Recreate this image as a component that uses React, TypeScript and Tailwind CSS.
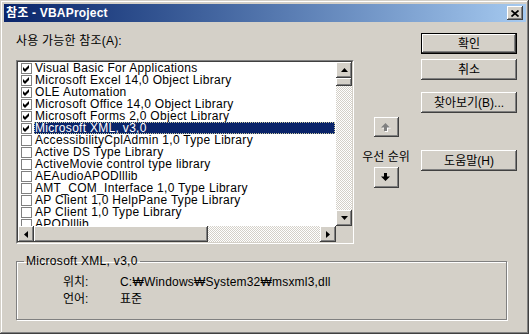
import React from "react";

const FONT = "font-['Liberation_Sans','Noto_Sans_CJK_KR',sans-serif]";
const RAISED =
  "shadow-[inset_-1px_-1px_0_#404040,inset_1px_1px_0_#ffffff,inset_-2px_-2px_0_#808080,inset_2px_2px_0_#d4d0c8]";
const CHECKER =
  "bg-[repeating-conic-gradient(#ffffff_0_25%,#d4d0c8_0_50%)] bg-[length:2px_2px]";

type Item = { label: string; checked: boolean; selected?: boolean };

const items: Item[] = [
  { label: "Visual Basic For Applications", checked: true },
  { label: "Microsoft Excel 14,0 Object Library", checked: true },
  { label: "OLE Automation", checked: true },
  { label: "Microsoft Office 14,0 Object Library", checked: true },
  { label: "Microsoft Forms 2,0 Object Library", checked: true },
  { label: "Microsoft XML, v3,0", checked: true, selected: true },
  { label: "AccessibilityCplAdmin 1,0 Type Library", checked: false },
  { label: "Active DS Type Library", checked: false },
  { label: "ActiveMovie control type library", checked: false },
  { label: "AEAudioAPODlllib", checked: false },
  { label: "AMT_COM_Interface 1,0 Type Library", checked: false },
  { label: "AP Client 1,0 HelpPane Type Library", checked: false },
  { label: "AP Client 1,0 Type Library", checked: false },
  { label: "APODlllib", checked: false },
];

function Check() {
  return (
    <svg width="7" height="7" viewBox="0 0 7 7">
      <polygon points="0,2 2,4 6,0 6,3 2,7 0,5" fill="#000" />
    </svg>
  );
}

function Tri({ dir, color = "#000" }: { dir: "up" | "down" | "left" | "right"; color?: string }) {
  const pts: Record<string, string> = {
    up: "3.5,0 7,4 0,4",
    down: "0,0 7,0 3.5,4",
    left: "4,0 4,7 0,3.5",
    right: "0,0 4,3.5 0,7",
  };
  const w = dir === "up" || dir === "down" ? 7 : 4;
  const h = dir === "up" || dir === "down" ? 4 : 7;
  return (
    <svg width={w} height={h} viewBox={`0 0 ${w} ${h}`}>
      <polygon points={pts[dir]} fill={color} />
    </svg>
  );
}

function ScrollBtn({ dir }: { dir: "up" | "down" | "left" | "right" }) {
  return (
    <div className={`w-[16px] h-[16px] shrink-0 bg-[#d4d0c8] ${RAISED} flex items-center justify-center`}>
      <Tri dir={dir} />
    </div>
  );
}

function BlockArrow({ dir, disabled }: { dir: "up" | "down"; disabled?: boolean }) {
  const up = "4.5,0 9,4.5 6,4.5 6,8 3,8 3,4.5 0,4.5";
  const down = "3,0 6,0 6,3.5 9,3.5 4.5,8 0,3.5 3,3.5";
  const pts = dir === "up" ? up : down;
  return (
    <svg width="10" height="9" viewBox="0 0 10 9">
      {disabled && <polygon points={pts} fill="#ffffff" transform="translate(1,1)" />}
      <polygon points={pts} fill={disabled ? "#808080" : "#000"} />
    </svg>
  );
}

function Button({ children, def, className = "" }: { children: React.ReactNode; def?: boolean; className?: string }) {
  return (
    <div
      className={`w-[96px] h-[21px] ${def ? "border border-black" : ""} bg-[#d4d0c8] ${className}`}
    >
      <div className={`w-full h-full ${RAISED} flex items-center justify-center text-[12px] leading-[12px] text-black`}>
        {children}
      </div>
    </div>
  );
}

export default function App() {
  return (
    <div className={`w-[529px] h-[334px] bg-[#d4d0c8] ${FONT} text-black select-none`}>
      <div
        className="w-full h-full pl-[4px] pt-[4px] pr-[3px] shadow-[inset_-1px_-1px_0_#404040,inset_1px_1px_0_#d4d0c8,inset_-2px_-2px_0_#808080,inset_2px_2px_0_#ffffff]"
      >
        {/* Title bar */}
        <div className="h-[18px] bg-gradient-to-r from-[#0a246a] to-[#a6caf0] flex items-center justify-between pl-[2px] pr-[3px]">
          <span className="text-white font-bold text-[12px] leading-[12px] tracking-[0.2px]">참조 - VBAProject</span>
          <div className={`w-[16px] h-[14px] bg-[#d4d0c8] ${RAISED} flex items-center justify-center`}>
            <svg width="8" height="7" viewBox="0 0 8 7">
              <path d="M0.5 0.5 L7.5 6.5 M7.5 0.5 L0.5 6.5" stroke="#000" strokeWidth="1.7" />
            </svg>
          </div>
        </div>

        {/* Body */}
        <div className="pl-[12px]">
          <div className="flex">
            {/* Left column */}
            <div className="flex flex-col">
              <div className="mt-[13px] text-[12px] leading-[12px] tracking-[0.2px]">사용 가능한 참조(A):</div>
              <div className="mt-[13px] w-[338px] h-[184px] border-t border-l border-[#808080] border-r border-b border-r-white border-b-white">
                <div className="w-full h-full border-t border-l border-[#404040] border-r border-b border-r-[#d4d0c8] border-b-[#d4d0c8] bg-white flex flex-col">
                  <div className="flex flex-1 min-h-0">
                    <div className="flex-1 overflow-hidden">
                      {items.map((it) => (
                        <div key={it.label} className="h-[12px] flex items-center">
                          <div className="ml-[3px] w-[11px] h-[11px] shrink-0 border border-[#808080] bg-white flex items-center justify-center">
                            {it.checked && <Check />}
                          </div>
                          <div
                            className={`ml-[2px] mr-[1px] flex-1 h-[12px] flex items-center pl-[1px] whitespace-nowrap text-[12px] leading-[12px] tracking-[0.3px] ${
                              it.selected ? "bg-[#0a246a] text-white outline outline-1 outline-dotted outline-offset-[-1px] outline-[#c8c8a0]" : ""
                            }`}
                          >
                            {it.label}
                          </div>
                        </div>
                      ))}
                    </div>
                    {/* Vertical scrollbar */}
                    <div className="w-[16px] flex flex-col">
                      <ScrollBtn dir="up" />
                      <div className={`w-[16px] h-[8px] bg-[#d4d0c8] ${RAISED}`} />
                      <div className={`flex-1 ${CHECKER}`} />
                      <ScrollBtn dir="down" />
                    </div>
                  </div>
                  {/* Horizontal scrollbar */}
                  <div className="h-[16px] flex shrink-0">
                    <ScrollBtn dir="left" />
                    <div className={`w-[174px] h-[16px] bg-[#d4d0c8] ${RAISED}`} />
                    <div className={`flex-1 ${CHECKER}`} />
                    <ScrollBtn dir="right" />
                    <div className="w-[16px] h-[16px] bg-[#d4d0c8]" />
                  </div>
                </div>
              </div>
            </div>

            {/* Middle column */}
            <div className="w-[67px] flex flex-col items-center pr-[3px]">
              <div className={`mt-[95px] w-[25px] h-[20px] bg-[#d4d0c8] ${RAISED} flex items-center justify-center`}>
                <BlockArrow dir="up" disabled />
              </div>
              <div className="mt-[14px] text-[12px] leading-[12px] whitespace-nowrap">우선 순위</div>
              <div className={`mt-[4px] w-[25px] h-[21px] bg-[#d4d0c8] ${RAISED} flex items-center justify-center`}>
                <BlockArrow dir="down" />
              </div>
            </div>

            {/* Right column */}
            <div className="flex flex-col">
              <Button def className="mt-[11px]">확인</Button>
              <Button className="mt-[5px]">취소</Button>
              <Button className="mt-[12px]">찾아보기(B)...</Button>
              <Button className="mt-[37px]">도움말(H)</Button>
            </div>
          </div>

          {/* Group box */}
          <fieldset className="mt-[11px] w-[491px] h-[65px] border border-[#808080] shadow-[inset_1px_1px_0_#ffffff,1px_1px_0_#ffffff] px-0 pb-0 m-0">
            <legend className="ml-[7px] px-[2px] text-[12px] leading-[12px] tracking-[0.3px]">Microsoft XML, v3,0</legend>
            <div className="pt-[9px] pl-[46px] grid grid-cols-[57px_auto] gap-y-[5px] text-[12px] leading-[12px]">
              <div>위치:</div>
              <div className="tracking-[0.2px]">C:₩Windows₩System32₩msxml3,dll</div>
              <div>언어:</div>
              <div>표준</div>
            </div>
          </fieldset>
        </div>
      </div>
    </div>
  );
}
